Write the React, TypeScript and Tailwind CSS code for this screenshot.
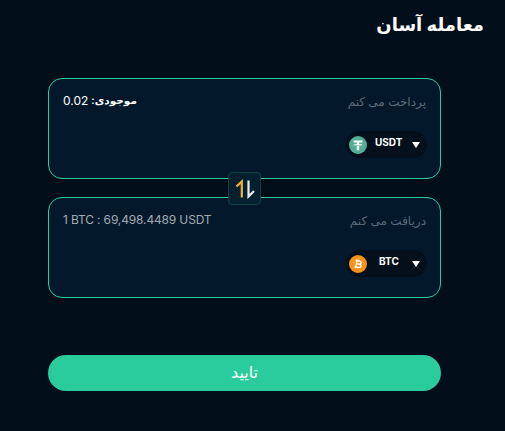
import React from 'react';

const font = { fontFamily: 'Inter, "DejaVu Sans", sans-serif' };

const TetherIcon = () => (
  <svg width="18" height="18" viewBox="0 0 18 18" className="shrink-0">
    <circle cx="9" cy="9" r="9" fill="#53ae94" />
    <path d="M4.600 4.400h8.800v2.200h-3.200v1.500c1.900.1 3.400.5 3.400 1s-1.500.9-3.400 1v4.100H7.800v-4.100c-1.900-.1-3.400-.5-3.400-1s1.500-.9 3.400-1V6.600H4.600z" fill="#fff" />
    <path d="M5.200 9.100c.8.4 2.200.6 3.800.6s3-.2 3.800-.6" fill="none" stroke="#53ae94" strokeWidth="0.6" />
  </svg>
);

const BitcoinIcon = () => (
  <svg width="18" height="18" viewBox="0 0 18 18" className="shrink-0">
    <circle cx="9" cy="9" r="9" fill="#f7931a" />
    <path d="M7.300 4.600v8.800M9.400 4.600v1.400M9.200 12v1.400M6 5.800h4c1.100 0 1.800.7 1.800 1.600S11.100 9 10 9H7.300M7.300 9h3.100c1.200 0 2 .7 2 1.600s-.8 1.600-2 1.600H6" fill="none" stroke="#fff" strokeWidth="1.300" transform="rotate(10 9 9)" />
  </svg>
);

const Pill = ({ icon, label, gap }: { icon: React.ReactNode; label: string; gap: string }) => (
  <div className="-mr-px flex h-[27px] w-[81px] items-center self-start rounded-full bg-[#03101b] pl-[3px] pr-[7px]" dir="ltr">
    {icon}
    <span className={`${gap} -mt-[4px] text-[10px] font-bold text-white`}>{label}</span>
    <span className="ml-auto mt-[1px] h-0 w-0 border-x-[4px] border-t-[6px] border-x-transparent border-t-white" />
  </div>
);

const Card = ({ title, left, pill }: { title: string; left: React.ReactNode; pill: React.ReactNode }) => (
  <div className="flex h-[101px] flex-col justify-between rounded-[14px] border border-[#2acc9e] bg-[#03192b] pb-[20px] pl-[14px] pr-[14px] pt-[14px]">
    <div className="flex items-center justify-between">
      <span className="text-[12px] leading-[18px] text-[#5b6b78]">{title}</span>
      {left}
    </div>
    {pill}
  </div>
);

export default function App() {
  return (
    <div dir="rtl" className="h-[431px] w-[505px] overflow-hidden bg-[#020e1a] pl-[48px] pr-[21px] pt-[10px]" style={font}>
      <h1 className="text-[18px] font-bold leading-[30px] text-white">معامله آسان</h1>
      <div className="relative mr-[43px] mt-[38px] flex w-[393px] flex-col gap-[18px]">
        <Card
          title="پرداخت می کنم"
          left={
            <span className="-mt-[2px] flex items-center gap-[3px] text-[10.5px] font-semibold leading-[18px] text-white">
              <span>موجودی:</span>
              <span className="text-[12px] font-normal">0.02</span>
            </span>
          }
          pill={<Pill icon={<TetherIcon />} label="USDT" gap="ml-[8px]" />}
        />
        <Card
          title="دریافت می کنم"
          left={
            <span dir="ltr" className="-mt-[2px] text-[12px] leading-[18px] tracking-[-0.15px] text-[#a3abb2]">
              1 BTC : 69,498.4489 USDT
            </span>
          }
          pill={<Pill icon={<BitcoinIcon />} label="BTC" gap="ml-[12px]" />}
        />
        <div className="absolute left-[180px] top-[94px] flex h-[33px] w-[33px] items-center justify-center rounded-[4px] border border-[#0f4040] bg-[#04202e]">
          <svg width="20" height="20" viewBox="0 0 20 20" fill="none" strokeWidth="2.200">
            <path d="M1.500 7.500L6.800 2.500V18.500" stroke="#f6ae3c" />
            <path d="M13.500 1.500V17.500L19 12" stroke="#e8edf2" />
          </svg>
        </div>
      </div>
      <button className="mr-[43px] mt-[57px] block h-[36px] w-[393px] rounded-full bg-[#2acc9e] pb-[3px] text-[16px] font-medium text-white">
        تایید
      </button>
    </div>
  );
}
